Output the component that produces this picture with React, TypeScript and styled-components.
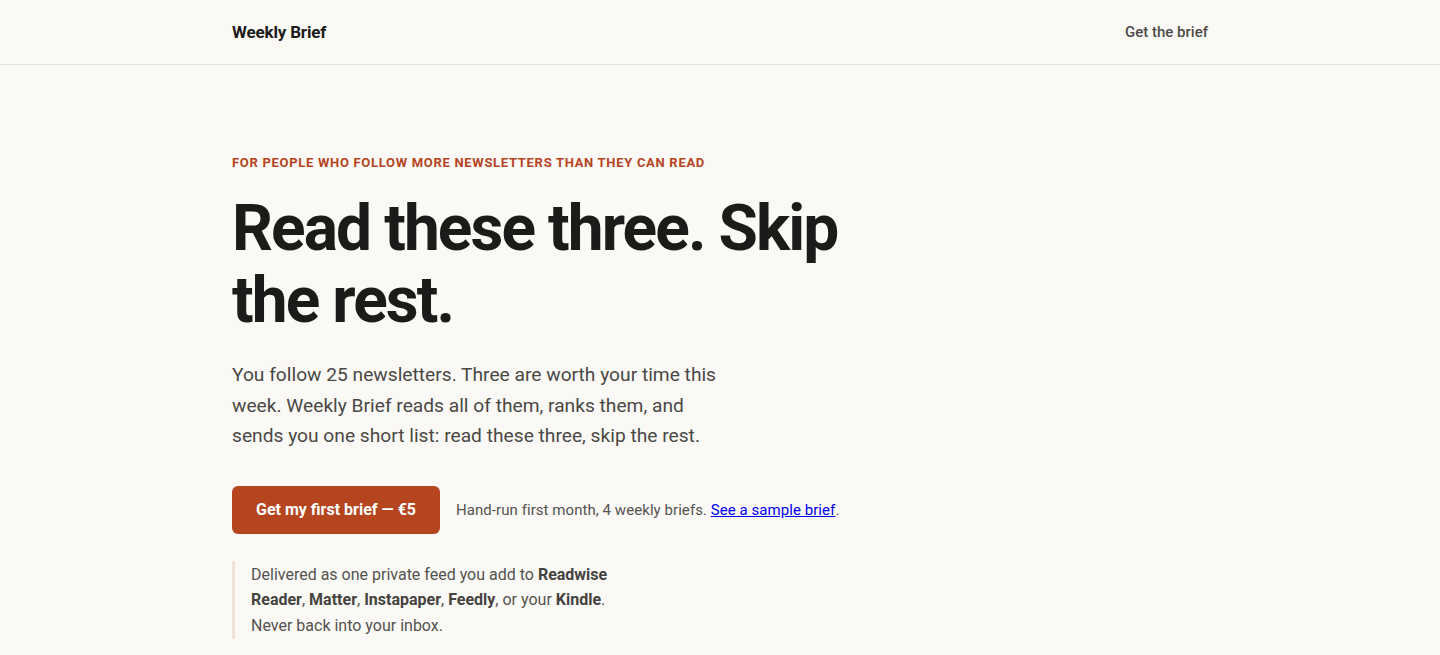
import * as React from 'react'
import styled, { createGlobalStyle } from 'styled-components'

const GlobalStyle = createGlobalStyle`
  * {
    box-sizing: border-box;
  }

  body {
    margin: 0;
    background: #faf9f6;
    color: #1c1b19;
    font-family: Roboto, "Liberation Sans", Arial, sans-serif;
  }
`

const Header = styled.header`
  border-bottom: 1px solid #e4e2dd;
`

const Wrap = styled.div`
  width: 100%;
  max-width: 976px;
  margin: 0 auto;
`

const Bar = styled(Wrap)`
  display: flex;
  align-items: center;
  justify-content: space-between;
  height: 64px;
`

const Logo = styled.a`
  font-size: 17px;
  font-weight: 700;
  letter-spacing: -0.01em;
  color: #1c1b19;
  text-decoration: none;
`

const NavLink = styled.a`
  font-size: 15px;
  font-weight: 500;
  color: #4d4b47;
  text-decoration: none;
`

const Hero = styled(Wrap)`
  padding-top: 90px;
`

const Eyebrow = styled.p`
  margin: 0;
  font-size: 13px;
  font-weight: 700;
  letter-spacing: 0.7px;
  text-transform: uppercase;
  color: #b5441f;
`

const Title = styled.h1`
  max-width: 640px;
  margin: 23px 0 0;
  font-size: 64px;
  line-height: 72px;
  font-weight: 700;
  letter-spacing: -0.03em;
  color: #1c1b19;
`

const Lead = styled.p`
  max-width: 500px;
  margin: 23px 0 0;
  font-size: 19.2px;
  line-height: 30.5px;
  color: #4a4845;
`

const Actions = styled.div`
  display: flex;
  align-items: center;
  gap: 16px;
  margin-top: 34px;
`

const Button = styled.a`
  display: inline-flex;
  align-items: center;
  justify-content: center;
  height: 48px;
  padding: 0 24px;
  border-radius: 6px;
  background: #b5451f;
  color: #fff;
  font-size: 16px;
  font-weight: 700;
  text-decoration: none;
`

const Note = styled.p`
  margin: 0;
  font-size: 15px;
  letter-spacing: 0.004em;
  color: #55534f;

  a {
    color: #0000ee;
  }
`

const Quote = styled.div`
  max-width: 390px;
  margin-top: 27px;
  padding: 1px 0 1px 16px;
  border-left: 3px solid #f2e1da;
  font-size: 16px;
  line-height: 25.5px;
  color: #55534f;

  b {
    font-weight: 700;
    color: #45433f;
  }
`

export default function App() {
  return (
    <>
      <GlobalStyle />
      <Header>
        <Bar>
          <Logo href="#">Weekly Brief</Logo>
          <NavLink href="#">Get the brief</NavLink>
        </Bar>
      </Header>
      <Hero>
        <Eyebrow>For people who follow more newsletters than they can read</Eyebrow>
        <Title>Read these three. Skip the rest.</Title>
        <Lead>
          You follow 25 newsletters. Three are worth your time this week. Weekly Brief reads
          all of them, ranks them, and sends you one short list: read these three, skip the rest.
        </Lead>
        <Actions>
          <Button href="#">Get my first brief — €5</Button>
          <Note>
            Hand-run first month, 4 weekly briefs. <a href="#">See a sample brief</a>.
          </Note>
        </Actions>
        <Quote>
          Delivered as one private feed you add to <b>Readwise Reader</b>, <b>Matter</b>,{' '}
          <b>Instapaper</b>, <b>Feedly</b>, or your <b>Kindle</b>. Never back into your inbox.
        </Quote>
      </Hero>
    </>
  )
}
